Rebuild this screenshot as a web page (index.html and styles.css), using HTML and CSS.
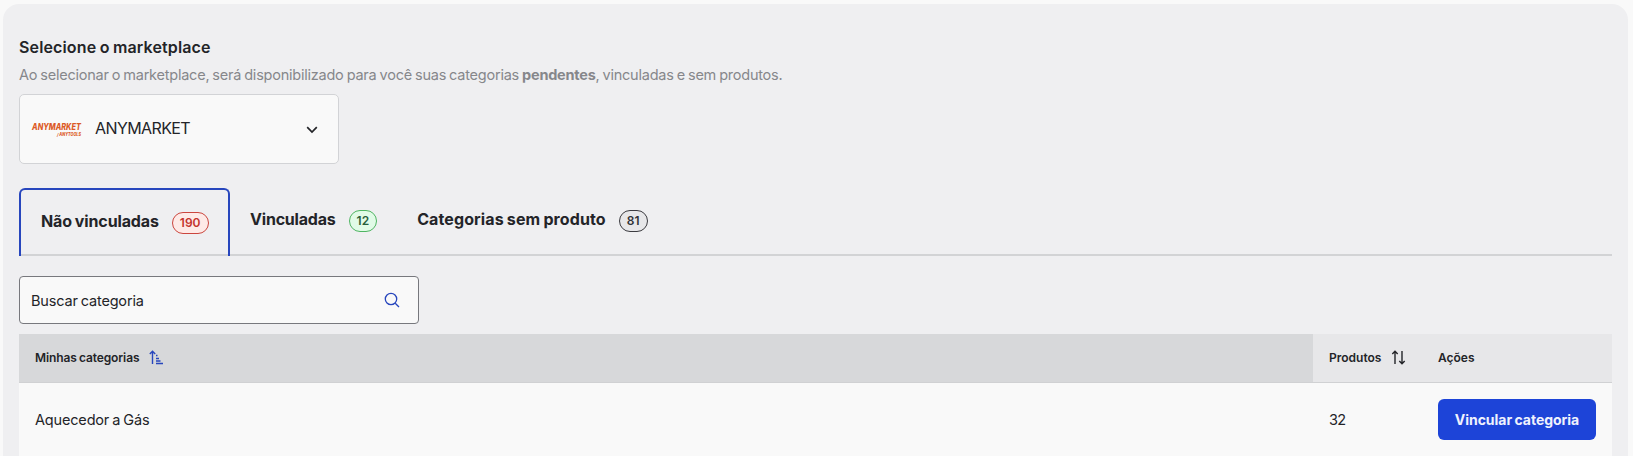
FILE: index.html
```html
<!DOCTYPE html>
<html lang="pt-BR">
<head>
    <meta charset="UTF-8">
    <title>Categorias</title>
    <link rel="stylesheet" href="styles.css">
</head>
<body>
<div class="panel">
    <h1 class="title">Selecione o marketplace</h1>
    <p class="desc">Ao selecionar o marketplace, será disponibilizado para você suas categorias <b>pendentes</b>, vinculadas e sem produtos.</p>

    <div class="select">
        <svg class="logo" width="52" height="21" viewBox="0 0 52 21">
            <text class="logo-name" x="1" y="11" textLength="49" lengthAdjust="spacingAndGlyphs">ANYMARKET</text>
            <text class="logo-by" x="26" y="17" textLength="24" lengthAdjust="spacingAndGlyphs">/ ANYTOOLS</text>
        </svg>
        <span class="select-value">ANYMARKET</span>
        <svg class="chevron" width="12" height="8" viewBox="0 0 12 8"><path d="M1.2 1.2 6 6l4.800-4.800"/></svg>
    </div>

    <div class="tabs">
        <div class="tab tab-1 selected"><span>Não vinculadas</span><i class="badge red">190</i></div>
        <div class="tab tab-2"><span>Vinculadas</span><i class="badge green">12</i></div>
        <div class="tab tab-3"><span>Categorias sem produto</span><i class="badge gray">81</i></div>
    </div>

    <div class="search">
        <span>Buscar categoria</span>
        <svg width="16" height="16" viewBox="0 0 16 16"><circle cx="7" cy="7" r="5.700"/><path d="M11.200 11.200 15 15"/></svg>
    </div>

    <table class="table">
        <thead>
        <tr>
            <th class="col-name sorted"><div class="th"><span class="th-name">Minhas categorias</span>
                <svg class="sort-asc" width="15" height="15" viewBox="0 0 15 15"><path d="M3.500 14V1.500M.8 4l2.700-2.700L6.200 4M7 5.500h1.500M7 8.500h3M7 11h4.500M7 13.500h7"/></svg></div></th>
            <th class="col-count"><div class="th"><span>Produtos</span>
                <svg class="sort" width="15" height="15" viewBox="0 0 15 15"><path d="M4 14V1.500M1.300 4 4 1.300 6.700 4M11 1v12.500M8.300 11l2.700 2.700 2.700-2.700"/></svg></div></th>
            <th class="col-action"><div class="th"><span>Ações</span></div></th>
        </tr>
        </thead>
        <tbody>
        <tr>
            <td class="cell-name">Aquecedor a Gás</td>
            <td class="cell-count">32</td>
            <td><button class="btn">Vincular categoria</button></td>
        </tr>
        </tbody>
    </table>
</div>
</body>
</html>
```
FILE: styles.css
```css
*{
    margin: 0;
    padding: 0;
    box-sizing: border-box;
}
html,body{
    height: 100%;
    overflow: hidden;
}
body{
    padding: 4px 0 0 3px;
    background-color: #f9f9f9;
    color: #232428;
    font-family: Inter, "Liberation Sans", sans-serif;
    word-spacing: -0.8px;
}
svg{
    fill: none;
    flex: none;
    overflow: visible;
}
.panel{
    width: 1625px;
    height: 100%;
    padding: 31px 16px 0;
    border-radius: 16px 16px 0 0;
    background-color: #efeff1;
}
.title{
    font-size: 16px;
    line-height: 24px;
    font-weight: 600;
    letter-spacing: 0.14px;
}
.desc{
    margin-top: 5px;
    font-size: 14.5px;
    line-height: 22px;
    letter-spacing: -0.23px;
    color: #86878b;
    white-space: nowrap;
}
.select{
    display: flex;
    align-items: center;
    width: 320px;
    height: 70px;
    margin-top: 8px;
    padding: 0 20px 0 11px;
    border: 1px solid #d2d3d6;
    border-radius: 5px;
    background-color: #f9f9f9;
}
.logo text{
    fill: #dc5a26;
    font-family: Inter, sans-serif;
    font-style: italic;
    font-weight: 800;
    word-spacing: 0;
}
.logo .logo-name{
    font-size: 9px;
}
.logo .logo-by{
    font-size: 4.5px;
}
.select-value{
    flex: 1;
    margin: -2px 0 0 12px;
    font-size: 16px;
    line-height: 20px;
    letter-spacing: -0.6px;
}
.chevron{
    margin-top: 1px;
}
.chevron path{
    stroke: #232428;
    stroke-width: 1.7;
}
.tabs{
    display: flex;
    height: 68px;
    margin-top: 24px;
    border-bottom: 2px solid #d2d3d5;
}
.tab{
    display: flex;
    height: 68px;
    padding: 19px 20px 0;
    font-size: 16px;
    line-height: 24px;
    font-weight: 700;
    white-space: nowrap;
}
.tab.selected{
    width: 211px;
    border: 2px solid #2746bd;
    border-bottom: 0;
    border-radius: 6px 6px 0 0;
}
.tab-1{
    letter-spacing: -0.12px;
}
.tab-2{
    letter-spacing: -0.2px;
}
.tab-3{
    letter-spacing: 0.11px;
}
.badge{
    height: 22px;
    margin: 3px 0 0 13px;
    padding: 0 7px;
    border: 1px solid;
    border-radius: 11px;
    font-size: 12px;
    line-height: 20px;
    font-style: normal;
    font-weight: 600;
    letter-spacing: 0;
}
.red{
    color: #c4342d;
    border-color: #cb463e;
    background-color: #feeae7;
}
.green{
    color: #28603a;
    border-color: #4fb562;
    background-color: #e1fbe7;
}
.gray{
    color: #303136;
    border-color: #3b3b40;
    background-color: #e7e7e9;
}
.search{
    display: flex;
    align-items: center;
    justify-content: space-between;
    width: 400px;
    height: 48px;
    margin-top: 20px;
    padding: 0 18px 0 11px;
    border: 1px solid #77787d;
    border-radius: 4px;
    background-color: #f9f9f9;
    font-size: 14.5px;
    letter-spacing: -0.18px;
}
.search svg{
    stroke: #2746bd;
    stroke-width: 1.3;
}
.table{
    width: 1593px;
    margin-top: 10px;
    border-collapse: separate;
    border-spacing: 0;
    table-layout: fixed;
    background-color: #f9f9f9;
}
.table th{
    height: 49px;
    padding: 0 16px 1px;
    border-bottom: 1px solid #d0d1d3;
    background-color: #e7e7e9;
    text-align: left;
    font-size: 12px;
    font-weight: 600;
}
.table th.sorted{
    background-color: #d7d8da;
}
.col-name{
    width: 1294px;
}
.col-count{
    width: 109px;
}
.th{
    display: flex;
    align-items: center;
    gap: 10px;
}
.th-name{
    letter-spacing: -0.1px;
}
.sort-asc{
    stroke: #2746bd;
    stroke-width: 1.4;
}
.sort{
    stroke: #232428;
    stroke-width: 1.4;
}
.table td{
    height: 73px;
    padding: 0 16px;
    font-size: 14.5px;
}
.table .cell-name{
    letter-spacing: -0.17px;
}
.table .cell-count{
    letter-spacing: -0.6px;
}
.btn{
    display: block;
    width: 158px;
    height: 41px;
    border: 0;
    border-radius: 6px;
    background-color: #1d44d8;
    color: #eff2fd;
    font-family: inherit;
    font-size: 14px;
    font-weight: 700;
    word-spacing: -0.8px;
    letter-spacing: -0.04px;
    white-space: nowrap;
}
```
